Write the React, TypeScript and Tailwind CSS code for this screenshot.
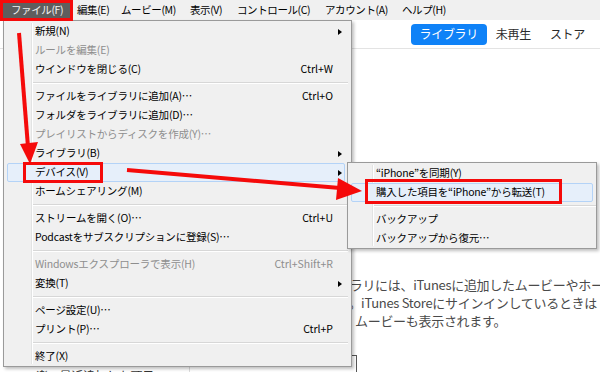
import React from 'react';

type Row = { label: string; shortcut?: string; sub?: boolean; disabled?: boolean; active?: boolean };
type Entry = Row | 'sep';

const MENU_BAR = ['編集(E)', 'ムービー(M)', '表示(V)', 'コントロール(C)', 'アカウント(A)', 'ヘルプ(H)'];

const FILE_MENU: Entry[] = [
  { label: '新規(N)', sub: true },
  { label: 'ルールを編集(E)', disabled: true },
  { label: 'ウインドウを閉じる(C)', shortcut: 'Ctrl+W' },
  'sep',
  { label: 'ファイルをライブラリに追加(A)…', shortcut: 'Ctrl+O' },
  { label: 'フォルダをライブラリに追加(D)…' },
  { label: 'プレイリストからディスクを作成(Y)…', disabled: true },
  { label: 'ライブラリ(B)', sub: true },
  { label: 'デバイス(V)', sub: true, active: true },
  { label: 'ホームシェアリング(M)' },
  'sep',
  { label: 'ストリームを開く(O)…', shortcut: 'Ctrl+U' },
  { label: 'Podcastをサブスクリプションに登録(S)…' },
  'sep',
  { label: 'Windowsエクスプローラで表示(H)', shortcut: 'Ctrl+Shift+R', disabled: true },
  { label: '変換(T)', sub: true },
  'sep',
  { label: 'ページ設定(U)…' },
  { label: 'プリント(P)…', shortcut: 'Ctrl+P' },
  'sep',
  { label: '終了(X)' },
];

const DEVICE_MENU: Entry[] = [
  { label: '“iPhone”を同期(Y)' },
  { label: '購入した項目を“iPhone”から転送(T)', active: true },
  'sep',
  { label: 'バックアップ' },
  { label: 'バックアップから復元…' },
];

function MenuRows({ items, indent, pad }: { items: Entry[]; indent: string; pad: string }) {
  return (
    <>
      {items.map((item, i) =>
        item === 'sep' ? (
          <div key={i} className={`flex h-[8px] flex-col justify-center ${indent}`}>
            <div className="h-px bg-[#d7d7d7]" />
            <div className="h-px bg-white" />
          </div>
        ) : (
          <div
            key={i}
            className={`relative z-10 mx-[3px] flex h-[19px] items-center rounded-[2px] border ${
              item.active ? 'border-[#b4d3f7] bg-[#e6effa]' : 'border-transparent'
            } ${item.disabled ? 'text-[#8e8e8e]' : 'text-black'}`}
          >
            <span className={`flex-1 whitespace-nowrap ${pad}`}>{item.label}</span>
            {item.shortcut && <span className="whitespace-nowrap tracking-normal">{item.shortcut}</span>}
            <span className="flex w-[11px] items-center justify-center">
              {item.sub && <span className="ml-[2px] h-0 w-0 border-y-[3.5px] border-l-[4px] border-y-transparent border-l-black" />}
            </span>
          </div>
        ),
      )}
    </>
  );
}

export default function App() {
  return (
    <div className="relative h-[372px] w-[600px] overflow-hidden bg-white font-['Noto_Sans_CJK_JP',sans-serif] text-[10.5px] leading-none tracking-[-0.2px]">
      {/* menu bar */}
      <div className="flex h-[20px] items-center bg-[#f0f0f0] pl-[3px] text-[10.5px] tracking-[-0.4px] text-black">
        <div className="flex h-[17px] w-[67px] items-center bg-[#5e5e5e] pl-[8px] text-[#f4f4f4]">ファイル(F)</div>
        <div className="w-[44px] pl-[7px]">{MENU_BAR[0]}</div>
        <div className="w-[69px] pl-[7px]">{MENU_BAR[1]}</div>
        <div className="w-[47px] pl-[7px]">{MENU_BAR[2]}</div>
        <div className="w-[88px] pl-[7px]">{MENU_BAR[3]}</div>
        <div className="w-[77px] pl-[7px]">{MENU_BAR[4]}</div>
        <div className="pl-[7px]">{MENU_BAR[5]}</div>
      </div>

      {/* window behind the menu */}
      <div className="flex h-[29px] items-center justify-end border-b border-[#e3e3e3] pr-[15px] text-[12px] tracking-[-0.3px] text-[#2b2b2b]">
        <div className="flex h-[21px] w-[76px] items-center justify-center rounded-[4px] bg-[#0f82f7] text-white">ライブラリ</div>
        <div className="ml-[9px]">未再生</div>
        <div className="ml-[19px]">ストア</div>
      </div>
      <div className="flex h-[323px]">
        <div className="flex w-[190px] shrink-0 flex-col justify-end border-r border-[#dcdcdc] pl-[36px] text-[12px] text-[#333]">
          <div className="translate-y-[10px] whitespace-nowrap">楽　最近追加した項目</div>
        </div>
        <div className="min-w-0 flex-1 overflow-hidden pl-[147px] pt-[227px] text-[13px] leading-[18px] tracking-[-0.3px] text-[#4a4a4a]">
          <div className="whitespace-nowrap">ブラリには、iTunesに追加したムービーやホームビデオ</div>
          <div className="whitespace-nowrap">す。iTunes Storeにサインインしているときは</div>
          <div className="whitespace-nowrap pl-[18px]">ムービーも表示されます。</div>
          <div className="ml-[-10px] mt-[25px] h-[20px] w-[30px] border-r border-t border-[#555]" />
        </div>
      </div>

      {/* file menu */}
      <div className="absolute left-[3px] top-[20px] h-[347px] w-[349px] border border-[#9a9a9a] bg-[#f0f0f0] pt-[1px] shadow-[2px_2px_3px_rgba(0,0,0,0.25)]">
        <div className="absolute bottom-[2px] left-[27px] top-[2px] w-px bg-[#e2e3e3]" />
        <div className="absolute bottom-[2px] left-[28px] top-[2px] w-px bg-white" />
        <div className="mr-[3px]">
          <MenuRows items={FILE_MENU} indent="ml-[28px]" pad="pl-[27px]" />
        </div>
      </div>

      {/* device submenu */}
      <div className="absolute left-[347px] top-[162px] h-[87px] w-[250px] border border-[#9a9a9a] bg-[#f0f0f0] pt-[1px] shadow-[2px_2px_3px_rgba(0,0,0,0.25)]">
        <div className="absolute bottom-[2px] left-[24px] top-[2px] w-px bg-[#e2e3e3]" />
        <div className="absolute bottom-[2px] left-[25px] top-[2px] w-px bg-white" />
        <MenuRows items={DEVICE_MENU} indent="ml-[25px]" pad="pl-[24px]" />
      </div>

      {/* red annotations */}
      <div className="absolute left-0 top-0 z-20 h-[21px] w-[73px] border-[3px] border-[#f50a0a]" />
      <div className="absolute left-[23px] top-[162px] z-20 h-[21px] w-[80px] border-[3px] border-[#f50a0a]" />
      <div className="absolute left-[365px] top-[179px] z-20 h-[25px] w-[197px] border-[3px] border-[#f50a0a]" />
      <svg className="absolute left-0 top-0 z-20" width="600" height="372" viewBox="0 0 600 372">
        <line x1="19" y1="33" x2="28" y2="147" stroke="#f50a0a" strokeWidth="4" />
        <polygon points="30,164 20,144 38,142" fill="#f50a0a" />
        <line x1="127" y1="170" x2="340" y2="188" stroke="#f50a0a" strokeWidth="4" />
        <polygon points="362,191 338,178 336,200" fill="#f50a0a" />
      </svg>
    </div>
  );
}
